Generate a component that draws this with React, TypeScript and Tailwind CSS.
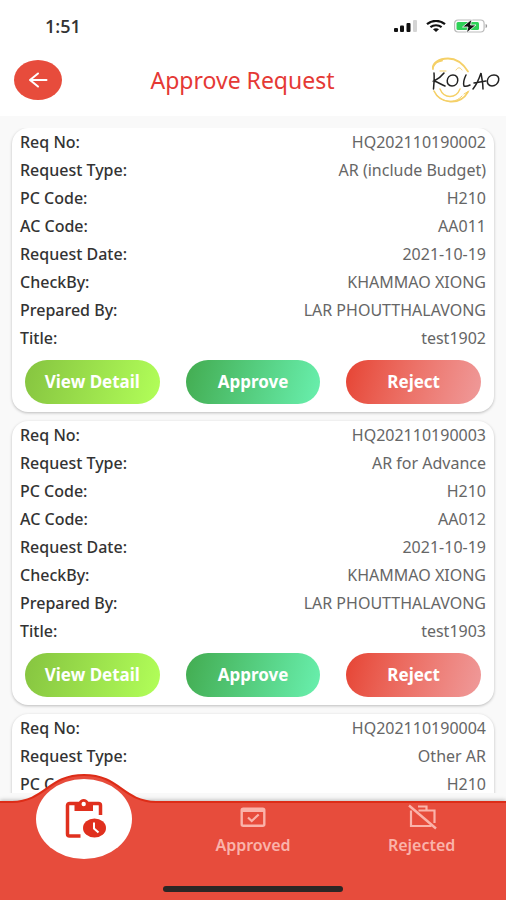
import type { ReactNode } from "react";

type Field = { label: string; value: string };
type ApprovalRequest = { id: string; fields: Field[]; ready: boolean };

const REQUESTS: ApprovalRequest[] = [
  {
    id: "HQ202110190002",
    ready: true,
    fields: [
      { label: "Request Type:", value: "AR (include Budget)" },
      { label: "PC Code:", value: "H210" },
      { label: "AC Code:", value: "AA011" },
      { label: "Request Date:", value: "2021-10-19" },
      { label: "CheckBy:", value: "KHAMMAO XIONG" },
      { label: "Prepared By:", value: "LAR PHOUTTHALAVONG" },
      { label: "Title:", value: "test1902" },
    ],
  },
  {
    id: "HQ202110190003",
    ready: true,
    fields: [
      { label: "Request Type:", value: "AR for Advance" },
      { label: "PC Code:", value: "H210" },
      { label: "AC Code:", value: "AA012" },
      { label: "Request Date:", value: "2021-10-19" },
      { label: "CheckBy:", value: "KHAMMAO XIONG" },
      { label: "Prepared By:", value: "LAR PHOUTTHALAVONG" },
      { label: "Title:", value: "test1903" },
    ],
  },
  {
    id: "HQ202110190004",
    ready: false,
    fields: [
      { label: "Request Type:", value: "Other AR" },
      { label: "PC Code:", value: "H210" },
    ],
  },
];

const ACTIONS = [
  { label: "View Detail", className: "from-[#86c440] to-[#b2ff59]" },
  { label: "Approve", className: "from-[#43ac50] to-[#69f0ae]" },
  { label: "Reject", className: "from-[#e64333] to-[#ef9a9a]" },
];

function StatusBar() {
  return (
    <div className="flex h-[52px] items-center justify-between pr-[18px] pl-[45px]">
      <span className="font-['Open_Sans',sans-serif] text-lg font-semibold text-[#333]">1:51</span>
      <div className="flex items-center gap-2">
        <svg className="h-3 w-6" viewBox="0 0 24 12" aria-hidden="true">
          <rect x="0" y="8" width="4" height="4" rx="1" fill="#111" />
          <rect x="6" y="5.5" width="4" height="6.5" rx="1" fill="#111" />
          <rect x="12.5" y="3" width="4" height="9" rx="1" fill="#111" />
          <rect x="19" y="0" width="4" height="12" rx="1" fill="#d4d4d4" />
        </svg>
        <svg className="h-3 w-5" viewBox="0 0 20 12" fill="none" stroke="#111" strokeWidth="2.2" aria-hidden="true">
          <path d="M1 4.2C6-.2 14-.2 19 4.2" />
          <path d="M4.4 7.2c3.2-2.6 8-2.6 11.2 0" />
          <path d="M7 9.2c1.8-1.3 4.2-1.3 6 0l-3 2.8z" fill="#111" stroke="none" />
        </svg>
        <svg className="h-[14px] w-[34px]" viewBox="0 0 34 14" aria-hidden="true">
          <rect x="0.6" y="1" width="29.5" height="12" rx="3.5" fill="#fff" stroke="#bbb" strokeWidth="1.2" />
          <rect x="2.5" y="3" width="22.5" height="8" rx="1.5" fill="#2fd158" />
          <path d="M31.6 5v4c2-.6 2-3.400 0-4z" fill="#999" />
          <path d="M18 0 8.500 8h5.500l-1.600 6L22 6h-5.500z" fill="#111" stroke="#fff" strokeWidth="0.8" />
        </svg>
      </div>
    </div>
  );
}

function KolaoLogo() {
  return (
    <svg className="h-12 w-[70px]" viewBox="0 0 70 48" fill="none" strokeLinecap="round" role="img" aria-label="Kolao">
      <g stroke="#f5d067">
        <path d="M2 13C1 7 8 2.500 17 2.500c9 0 15 5 20 13" strokeWidth="1.800" />
        <path d="M2 11C4 6 7 5 11 4.500" strokeWidth="1.800" />
        <path d="M25 14c2-3 4-3 6 0M9 15h6" strokeWidth="1" />
        <path d="M3 35c6 13 26 15 34 1" strokeWidth="1.600" />
        <path d="M9 33c4 10 16 10 20 0" strokeWidth="1.400" />
        <path d="M5 38c7 9 19 10 26 2M33 38l5-3" strokeWidth="1" />
      </g>
      <g stroke="#222" strokeWidth="1.500">
        <path d="M3 17c.5 5 0 10-.5 16M13 17C10 21 7 23 3 25c4 1 8 4 11 5" />
        <path d="M22 19c-7 0-8 11-1 11s8-11 1-11z" />
        <path d="M35 19c-2 4-3 8-2 11 2 1 4 0 6-1" />
        <path d="M42 33c4-5 6-10 8-16 1 6 2 10 2 16M43 27l12-2" />
        <path d="M63 19c-8 0-9 11-2 11s10-11 2-11z" />
      </g>
    </svg>
  );
}

function Header() {
  return (
    <header className="shrink-0 bg-white">
      <StatusBar />
      <div className="flex h-16 items-center pr-[5px] pb-2 pl-[14px]">
        <button
          aria-label="Back"
          className="flex h-10 w-12 shrink-0 items-center justify-center rounded-[50%] bg-[#e74c3c] text-white"
        >
          <svg className="h-4 w-5" viewBox="0 0 20 16" fill="none" stroke="currentColor" strokeWidth="2" strokeLinecap="round" strokeLinejoin="round">
            <path d="M18.500 8H2M10 1.500 2 8l8 6.500" />
          </svg>
        </button>
        <h1 className="flex-1 pr-2 text-center text-[23px] leading-7 text-[#e53935]">Approve Request</h1>
        <KolaoLogo />
      </div>
    </header>
  );
}

function RequestCard({ request }: { request: ApprovalRequest }) {
  const rows = [{ label: "Req No:", value: request.id }, ...request.fields];

  return (
    <article className="min-h-[284px] rounded-2xl bg-white px-2 pb-2 shadow-[0_1px_3px_rgba(0,0,0,0.25)]">
      <dl>
        {rows.map((row) => (
          <div key={row.label} className="flex h-7 items-center justify-between text-base">
            <dt className="font-medium text-[#333]">{row.label}</dt>
            <dd className="text-[#666]">{row.value}</dd>
          </div>
        ))}
      </dl>
      {request.ready && (
        <div className="mt-2 grid grid-cols-3 gap-[26px] px-[5px]">
          {ACTIONS.map((action) => (
            <button
              key={action.label}
              className={`h-11 rounded-full bg-linear-105 text-[17px] font-bold whitespace-nowrap text-white ${action.className}`}
            >
              {action.label}
            </button>
          ))}
        </div>
      )}
    </article>
  );
}

function PendingIcon() {
  return (
    <svg className="h-10 w-[42px]" viewBox="0 0 42 40" fill="none" aria-hidden="true">
      <path d="M15.500 37H4.500a2 2 0 0 1-2-2V6.500a2 2 0 0 1 2-2h29a2 2 0 0 1 2 2V16" stroke="currentColor" strokeWidth="3.500" />
      <path
        d="M9.500 3.500h4.300C14.500 1.300 16.500 0 18.700 0s4.200 1.300 4.900 3.500h4.400V12H9.500z"
        fill="currentColor"
      />
      <circle cx="18.700" cy="5" r="2.200" fill="#fff" />
      <ellipse cx="29.500" cy="29" rx="11.500" ry="9.500" fill="currentColor" />
      <path d="M29 23.500v6l4.500 4" stroke="#fff" strokeWidth="2" />
    </svg>
  );
}

function ApprovedIcon() {
  return (
    <svg className="h-7 w-8" viewBox="0 0 32 28" fill="none" stroke="currentColor" aria-hidden="true">
      <rect x="4.700" y="5.700" width="22.600" height="17.100" rx="1.500" strokeWidth="2.400" />
      <path d="M4 7.500h24" strokeWidth="3" />
      <path d="m11 14.500 3.700 3.500 7-6.500" strokeWidth="2.200" />
    </svg>
  );
}

function RejectedIcon() {
  return (
    <svg className="h-7 w-8" viewBox="0 0 32 28" fill="none" stroke="currentColor" strokeWidth="2.200" aria-hidden="true">
      <path d="M12 3.500h8.500v4M12.500 7.500h16V20M5 7.500v15.500h20.500" />
      <path d="m3 2.500 27 23" strokeWidth="2.400" />
    </svg>
  );
}

function Tab({ label, icon }: { label: string; icon: ReactNode }) {
  return (
    <button className="flex flex-col items-center gap-1 text-[#fab3aa]">
      {icon}
      <span className="text-base leading-5 font-semibold">{label}</span>
    </button>
  );
}

function BottomNav() {
  return (
    <nav className="relative shrink-0 bg-[#e74c3c] shadow-[0_-1px_4px_rgba(0,0,0,0.25)]">
      <div className="grid h-[85px] grid-cols-3 items-start border-t-2 border-[#dd2c17]">
        <div className="relative flex justify-center">
          {/* Raised bump behind the active tab */}
          <svg className="absolute -top-[30px] h-[34px] w-[144px]" viewBox="0 0 144 34" aria-hidden="true">
            <path d="M0 29C34 28 36 2 72 2s38 26 72 27v5H0z" fill="#e74c3c" />
            <path d="M0 29C34 28 36 2 72 2s38 26 72 27" fill="none" stroke="#dd2c17" strokeWidth="2" />
          </svg>
          <button
            aria-label="Pending requests"
            aria-current="page"
            className="relative -mt-6 flex h-20 w-24 items-center justify-center rounded-[50%] bg-white pl-1 text-[#e0301e]"
          >
            <PendingIcon />
          </button>
        </div>
        <Tab label="Approved" icon={<ApprovedIcon />} />
        <Tab label="Rejected" icon={<RejectedIcon />} />
      </div>
      <div className="mx-auto mb-2 h-[6px] w-[180px] rounded-full bg-[#2b2625]" />
    </nav>
  );
}

export default function App() {
  return (
    <div className="flex h-screen flex-col bg-[#f9f9f9] font-['Noto_Sans',sans-serif]">
      <Header />
      <main className="mt-3 mb-2 flex min-h-0 flex-1 flex-col gap-[9px] overflow-y-auto px-3 [scrollbar-width:none] *:shrink-0">
        {REQUESTS.map((request) => (
          <RequestCard key={request.id} request={request} />
        ))}
      </main>
      <BottomNav />
    </div>
  );
}
